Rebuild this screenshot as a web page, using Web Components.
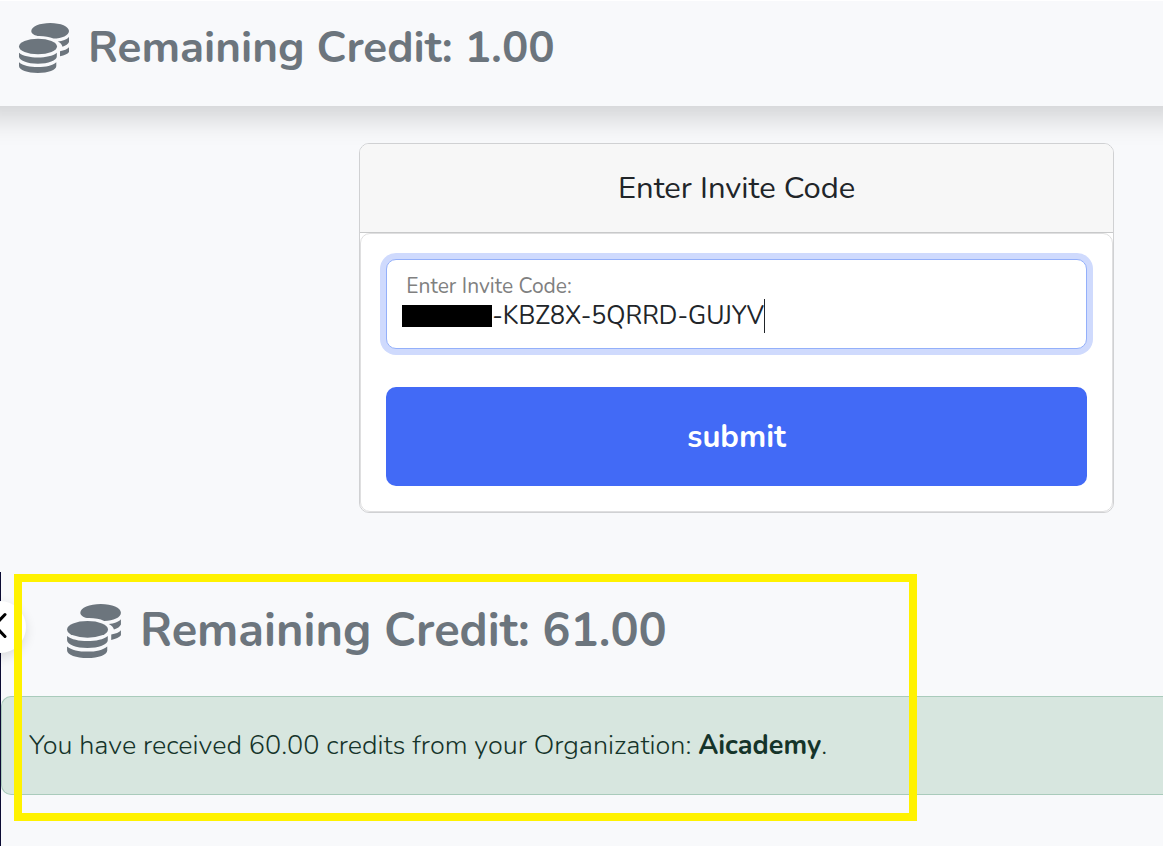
<!DOCTYPE html>
<html lang="en">
<head>
<meta charset="utf-8">
<meta name="viewport" content="width=device-width, initial-scale=1">
<title>Remaining Credit</title>
<style>
  html { background: #f8f9fb; }
  body { margin: 0; font-family: Nunito, Lato, "Open Sans", sans-serif; font-weight: 400; color: #212529; overflow: hidden; }
</style>
</head>
<body>
<credit-app></credit-app>
<script>
const define = (name, html) => customElements.define(name, class extends HTMLElement {
  connectedCallback() {
    if (this.shadowRoot) return;
    const t = document.createElement('template');
    t.innerHTML = html;
    this.attachShadow({ mode: 'open' }).append(t.content.cloneNode(true));
  }
});

define('coins-icon', `
<style>
  :host { display: block; flex: none; width: var(--icon, 52px); height: var(--icon, 52px); }
  svg { display: block; width: 100%; height: 100%; }
</style>
<svg viewBox="0 0 52 52" fill="currentColor" aria-hidden="true">
  <path d="M13.3 9C13.3 4.6 21.8 1 32.3 1S51 4.6 51 9s-7 7.600-15.500 7.600C31 14.600 26 13.800 19.500 14C16 13 13.300 11.500 13.300 9Z"/>
  <path d="M51 15v5c-1 2-3 3.600-6.500 4.700c-.5-2-2-3.800-4.700-5.200C44.500 19 49 17.500 51 15Z"/>
  <path d="M51 25.300v4.700c-1.500 2-4.500 3.500-9 4.300v-5C46 28.500 49.500 27.300 51 25.300Z"/>
  <ellipse cx="20" cy="24.500" rx="19" ry="7.800"/>
  <path d="M1 30.700c4 3.300 11 4.700 18.900 4.700s15-1.400 18.900-4.700v3.800c0 4-8.500 7.200-18.900 7.200S1 38.500 1 34.500Z"/>
  <path d="M1 40.300c4 3.400 11 4.800 18.900 4.800s14.500-1.400 18.400-4.800v3.700c0 4-8 7-18.400 7S1 48 1 44Z"/>
</svg>`);

define('credit-heading', `
<style>
  :host { display: flex; align-items: center; gap: 18px; color: #6c757d; font-size: var(--size, 44px); }
  h1 { margin: 0; font: inherit; font-weight: 660; line-height: 60px; white-space: nowrap; }
</style>
<coins-icon></coins-icon><h1><slot></slot></h1>`);

define('top-bar', `
<style>
  :host { display: block; box-sizing: border-box; height: 106px; margin: 0 -30px; padding: 17px 48px 0;
    background: #f8f9fb; border-top: 1px solid #fff; box-shadow: 0 13px 26px rgba(0,0,0,.15); }
</style>
<slot></slot>`);

define('invite-card', `
<style>
  :host { display: block; box-sizing: border-box; width: 64.9%; margin: 37px 49px 0 auto;
    border: 1px solid #d0d1d3; border-radius: 10px; background: #fff; position: relative; }
  h2 { margin: 0; font-size: 31px; font-weight: inherit; line-height: 88px; text-align: center;
    background: #f7f7f7; border-bottom: 1px solid #c8c9ca; border-radius: 9px 9px 0 0; }
  form { padding: 25px; border: 1px solid #dfdfe0; border-radius: 10px; }
</style>
<h2><slot name="title"></slot></h2>
<form onsubmit="return false"><slot></slot></form>`);

define('code-field', `
<style>
  :host { display: block; box-sizing: border-box; height: 90px; padding: 13px 15px; margin-bottom: 38px;
    border: 1px solid #94b0fa; border-radius: 10px; box-shadow: 0 0 0 6px #cfdafd; background: #fff; }
  label { display: block; padding-left: 4px; font-size: 21px; line-height: 26px; color: #808080; }
  .row { display: flex; align-items: center; height: 34px; }
  .mask { width: 90px; height: 22px; background: #000; }
  input { width: 272px; height: 34px; box-sizing: border-box; padding: 0; border: 0; outline: 0; background: none;
    font: inherit; font-size: 25px; color: #212529; }
  .caret { width: 1px; height: 34px; background: #212529; }
</style>
<label for="code"><slot></slot></label>
<div class="row"><span class="mask"></span><input id="code" type="text" value="-KBZ8X-5QRRD-GUJYV" spellcheck="false"><span class="caret"></span></div>`);

define('submit-button', `
<style>
  :host { display: block; }
  button { display: block; width: 100%; height: 99px; border: 0; border-radius: 10px; background: #426af6;
    color: #fff; font: inherit; font-size: 31px; font-weight: 750; cursor: pointer; }
</style>
<button type="submit"><slot></slot></button>`);

define('result-panel', `
<style>
  :host { display: block; position: relative; box-sizing: border-box; margin-top: 59px; min-height: 274px;
    border-left: 1px solid #0b0b33; padding-top: 29px; }
  .toggle { position: absolute; left: -27px; top: 29px; width: 52px; height: 52px; padding: 0; border: 0;
    border-radius: 50%; background: #fff; box-shadow: 0 4px 12px rgba(0,0,0,.12); }
  .toggle svg { display: block; width: 52px; height: 52px; }
  .frame { position: absolute; left: 13px; right: 246px; top: 2px; height: 247px; box-sizing: border-box;
    border: 8px solid #fff200; pointer-events: none; }
</style>
<button class="toggle" type="button" aria-label="Collapse sidebar"><svg viewBox="0 0 52 52" fill="none" stroke="#000" stroke-width="3" stroke-linecap="round"><path d="M31 13.500L20.500 24.500L31 35.500"/></svg></button>
<slot></slot>
<div class="frame"></div>`);

define('success-alert', `
<style>
  :host { display: block; box-sizing: border-box; margin-top: 35px; padding: 0 27px; border: 1px solid #a9cbbb;
    border-right: 0; border-radius: 10px 0 0 10px; background: #d7e6df; color: #15342a;
    font-size: 27px; font-weight: 340; line-height: 97px; white-space: nowrap; }
</style>
<slot></slot>`);

define('credit-app', `
<style>
  :host { display: block; }
  .second { --size: 47px; --icon: 56px; padding-left: 65px; }
  strong { font-weight: 700; }
</style>
<top-bar><credit-heading>Remaining Credit: 1.00</credit-heading></top-bar>
<invite-card>
  <span slot="title">Enter Invite Code</span>
  <code-field>Enter Invite Code:</code-field>
  <submit-button>submit</submit-button>
</invite-card>
<result-panel>
  <credit-heading class="second">Remaining Credit: 61.00</credit-heading>
  <success-alert>You have received 60.00 credits from your Organization: <strong>Aicademy</strong>.</success-alert>
</result-panel>`);
</script>
</body>
</html>
